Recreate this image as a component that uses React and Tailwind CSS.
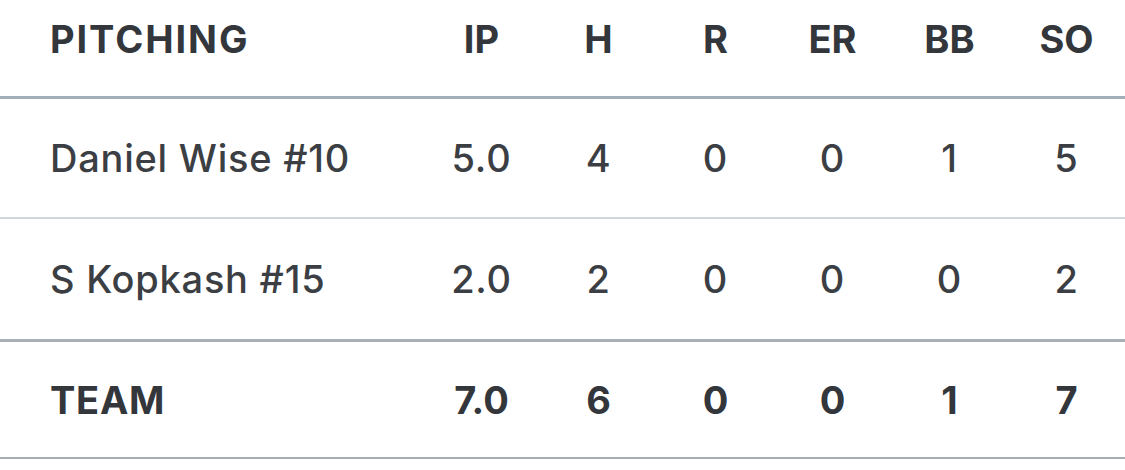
const rows = [
  { name: "Daniel Wise #10", stats: ["5.0", "4", "0", "0", "1", "5"] },
  { name: "S Kopkash #15", stats: ["2.0", "2", "0", "0", "0", "2"] },
];

const team = { name: "TEAM", stats: ["7.0", "6", "0", "0", "1", "7"] };
const cols = ["IP", "H", "R", "ER", "BB", "SO"];

const Row = ({ name, stats, bold, nameTrack, className }) => (
  <div
    className={`grid grid-cols-[423px_repeat(6,117px)] items-center ${
      bold ? "font-bold text-[#33363b]" : "font-medium text-[#3b3e43] tracking-[0.02em]"
    } ${className}`}
  >
    <div className={`pl-[50px] ${nameTrack || ""}`}>{name}</div>
    {stats.map((s, i) => (
      <div key={i} className="text-center">
        {s}
      </div>
    ))}
  </div>
);

export default function App() {
  return (
    <div className="w-[1125px] h-[470px] bg-white font-['Inter',sans-serif] text-[38px] leading-none">
      <Row
        name="PITCHING"
        stats={cols}
        bold
        nameTrack="tracking-[0.05em]"
        className="h-[99px] pb-[19px] border-b-[3px] border-[#a4aeb7]"
      />
      <Row {...rows[0]} className="h-[120px] border-b-2 border-[#cfd7db]" />
      <Row {...rows[1]} className="h-[120px]" />
      <Row
        {...team}
        bold
        nameTrack="tracking-[0.02em]"
        className="h-[120px] border-t-[3px] border-b-2 border-t-[#a8b1b8] border-b-[#a5aeb4]"
      />
    </div>
  );
}
